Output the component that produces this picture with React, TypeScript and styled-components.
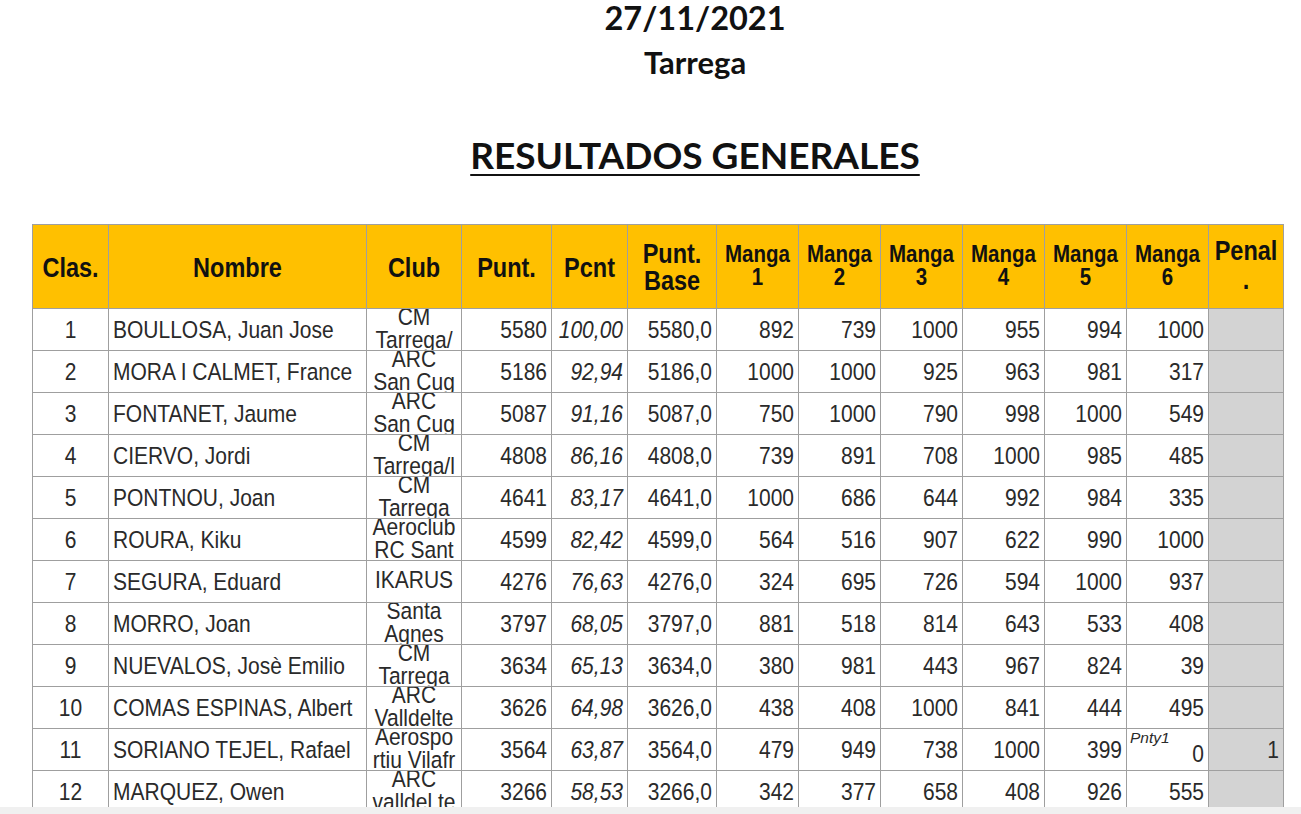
import React from 'react';
import styled, { createGlobalStyle } from 'styled-components';

interface Row {
  pos: number;
  name: string;
  club: string[];
  punt: number;
  pcnt: string;
  base: string;
  mangas: string[];
  penal?: string;
}

const rows: Row[] = [
  { pos: 1, name: 'BOULLOSA, Juan Jose', club: ['CM', 'Tarrega/'], punt: 5580, pcnt: '100,00', base: '5580,0', mangas: ['892', '739', '1000', '955', '994', '1000'] },
  { pos: 2, name: 'MORA I CALMET, France', club: ['ARC', 'San Cug'], punt: 5186, pcnt: '92,94', base: '5186,0', mangas: ['1000', '1000', '925', '963', '981', '317'] },
  { pos: 3, name: 'FONTANET, Jaume', club: ['ARC', 'San Cug'], punt: 5087, pcnt: '91,16', base: '5087,0', mangas: ['750', '1000', '790', '998', '1000', '549'] },
  { pos: 4, name: 'CIERVO, Jordi', club: ['CM', 'Tarrega/l'], punt: 4808, pcnt: '86,16', base: '4808,0', mangas: ['739', '891', '708', '1000', '985', '485'] },
  { pos: 5, name: 'PONTNOU, Joan', club: ['CM', 'Tarrega'], punt: 4641, pcnt: '83,17', base: '4641,0', mangas: ['1000', '686', '644', '992', '984', '335'] },
  { pos: 6, name: 'ROURA, Kiku', club: ['Aeroclub', 'RC Sant'], punt: 4599, pcnt: '82,42', base: '4599,0', mangas: ['564', '516', '907', '622', '990', '1000'] },
  { pos: 7, name: 'SEGURA, Eduard', club: ['IKARUS'], punt: 4276, pcnt: '76,63', base: '4276,0', mangas: ['324', '695', '726', '594', '1000', '937'] },
  { pos: 8, name: 'MORRO, Joan', club: ['Santa', 'Agnes'], punt: 3797, pcnt: '68,05', base: '3797,0', mangas: ['881', '518', '814', '643', '533', '408'] },
  { pos: 9, name: 'NUEVALOS, Josè Emilio', club: ['CM', 'Tarrega'], punt: 3634, pcnt: '65,13', base: '3634,0', mangas: ['380', '981', '443', '967', '824', '39'] },
  { pos: 10, name: 'COMAS ESPINAS, Albert', club: ['ARC', 'Valldelte'], punt: 3626, pcnt: '64,98', base: '3626,0', mangas: ['438', '408', '1000', '841', '444', '495'] },
  { pos: 11, name: 'SORIANO TEJEL, Rafael', club: ['Aerospo', 'rtiu Vilafr'], punt: 3564, pcnt: '63,87', base: '3564,0', mangas: ['479', '949', '738', '1000', '399', 'Pnty1|0'], penal: '1' },
  { pos: 12, name: 'MARQUEZ, Owen', club: ['ARC', 'valldel te'], punt: 3266, pcnt: '58,53', base: '3266,0', mangas: ['342', '377', '658', '408', '926', '555'] },
];

const colWidths = [76, 258, 95, 90, 76, 89, 82, 82, 82, 82, 82, 82, 75];

const GlobalStyle = createGlobalStyle`
  html, body {
    margin: 0;
    padding: 0;
    background: #ffffff;
    overflow: hidden;
  }
  body {
    font-family: "Liberation Sans", Arial, sans-serif;
  }
`;

const Page = styled.div`
  width: 1301px;
  height: 814px;
  overflow: hidden;
  position: relative;
`;

const Titles = styled.div`
  padding-left: 89px;
  text-align: center;
  font-family: Lato, "Open Sans", sans-serif;
  font-weight: 700;
  color: #111;
`;

const DateLine = styled.div`
  font-size: 32.5px;
  line-height: 36px;
`;

const Place = styled.div`
  font-size: 31px;
  line-height: 52px;
`;

const Heading = styled.div`
  margin-top: 44px;
  font-size: 37px;
  line-height: 46px;
  text-decoration: underline;
  text-decoration-thickness: 2px;
  text-underline-offset: 5px;
`;

const TableWrap = styled.div`
  padding-left: 32px;
  margin-top: 46px;
`;

const Table = styled.table`
  border-collapse: collapse;
  table-layout: fixed;
  width: 1251px;
  font-family: "Liberation Sans", Arial, sans-serif;
`;

const HeadRow = styled.tr`
  height: 84px;
`;

const BodyRow = styled.tr`
  height: 41.83px;
`;

// the sheet's text is drawn a little taller than wide
const Txt = styled.span<{ $sy?: number }>`
  display: inline-block;
  transform: scaleY(${(p) => p.$sy ?? 1.15});
`;

type HeadKind = 'plain' | 'manga' | 'penal';

const Head = styled.th<{ $kind?: HeadKind }>`
  background: #ffc000;
  color: #111;
  font-weight: 700;
  font-size: ${(p) => (p.$kind === 'manga' ? '20.5px' : '23.5px')};
  line-height: ${(p) => (p.$kind === 'manga' ? '20px' : p.$kind === 'penal' ? '24px' : '22px')};
  border: 1px solid #9f9f9f;
  text-align: center;
  vertical-align: ${(p) => (p.$kind && p.$kind !== 'plain' ? 'top' : 'middle')};
  padding: ${(p) => (p.$kind === 'manga' ? '20px 0 0' : p.$kind === 'penal' ? '16px 0 0' : '0 2px')};
  white-space: nowrap;
`;

const Cell = styled.td<{ $align?: 'left' | 'right' | 'center'; $gray?: boolean; $italic?: boolean }>`
  border: 1px solid #9f9f9f;
  padding: 0 4px;
  font-size: 21px;
  line-height: 24px;
  color: #2a2a2a;
  text-align: ${(p) => p.$align || 'right'};
  font-style: ${(p) => (p.$italic ? 'italic' : 'normal')};
  background: ${(p) => (p.$gray ? '#d3d3d3' : '#ffffff')};
  white-space: nowrap;
  overflow: hidden;
  vertical-align: middle;
`;

const ClubCell = styled.td`
  border: 1px solid #9f9f9f;
  padding: 0;
  overflow: hidden;
  vertical-align: middle;
`;

const ClubBox = styled.div`
  height: 41px;
  box-sizing: border-box;
  padding-bottom: 4px;
  overflow: hidden;
  display: flex;
  flex-direction: column;
  justify-content: center;
  align-items: center;
  font-size: 21px;
  line-height: 23px;
  color: #2a2a2a;
  white-space: nowrap;
`;

const NoteCell = styled.td`
  border: 1px solid #9f9f9f;
  padding: 0 4px 4px;
  position: relative;
  text-align: right;
  vertical-align: bottom;
  font-size: 21px;
  line-height: 24px;
  color: #2a2a2a;
`;

const Note = styled.span`
  position: absolute;
  left: 3px;
  top: 1px;
  font-size: 15.5px;
  font-style: italic;
  line-height: 16px;
`;

const BottomBar = styled.div`
  position: absolute;
  left: 0;
  right: 0;
  bottom: 0;
  height: 7px;
  background: #f0f0f0;
`;

const App: React.FC = () => {
  return (
    <Page>
      <GlobalStyle />
      <Titles>
        <DateLine>27/11/2021</DateLine>
        <Place>Tarrega</Place>
        <Heading>RESULTADOS GENERALES</Heading>
      </Titles>
      <TableWrap>
        <Table>
          <colgroup>
            {colWidths.map((w, i) => (
              <col key={i} style={{ width: w }} />
            ))}
          </colgroup>
          <thead>
            <HeadRow>
              {['Clas.', 'Nombre', 'Club', 'Punt.', 'Pcnt'].map((h) => (
                <Head key={h}>
                  <Txt $sy={1.2}>{h}</Txt>
                </Head>
              ))}
              <Head>
                <Txt $sy={1.2}>
                  Punt.
                  <br />
                  Base
                </Txt>
              </Head>
              {[1, 2, 3, 4, 5, 6].map((n) => (
                <Head $kind="manga" key={n}>
                  <Txt>
                    Manga
                    <br />
                    {n}
                  </Txt>
                </Head>
              ))}
              <Head $kind="penal">
                <Txt $sy={1.2}>
                  Penal
                  <br />.
                </Txt>
              </Head>
            </HeadRow>
          </thead>
          <tbody>
            {rows.map((r) => (
              <BodyRow key={r.pos}>
                <Cell $align="center">
                  <Txt>{r.pos}</Txt>
                </Cell>
                <Cell $align="left">
                  <Txt>{r.name}</Txt>
                </Cell>
                <ClubCell>
                  <ClubBox>
                    {r.club.map((c, i) => (
                      <Txt key={i}>{c}</Txt>
                    ))}
                  </ClubBox>
                </ClubCell>
                <Cell>
                  <Txt>{r.punt}</Txt>
                </Cell>
                <Cell $italic>
                  <Txt>{r.pcnt}</Txt>
                </Cell>
                <Cell>
                  <Txt>{r.base}</Txt>
                </Cell>
                {r.mangas.map((m, i) =>
                  m.includes('|') ? (
                    <NoteCell key={i}>
                      <Note>{m.split('|')[0]}</Note>
                      <Txt>{m.split('|')[1]}</Txt>
                    </NoteCell>
                  ) : (
                    <Cell key={i}>
                      <Txt>{m}</Txt>
                    </Cell>
                  )
                )}
                <Cell $gray>{r.penal ? <Txt>{r.penal}</Txt> : null}</Cell>
              </BodyRow>
            ))}
          </tbody>
        </Table>
      </TableWrap>
      <BottomBar />
    </Page>
  );
};

export default App;
